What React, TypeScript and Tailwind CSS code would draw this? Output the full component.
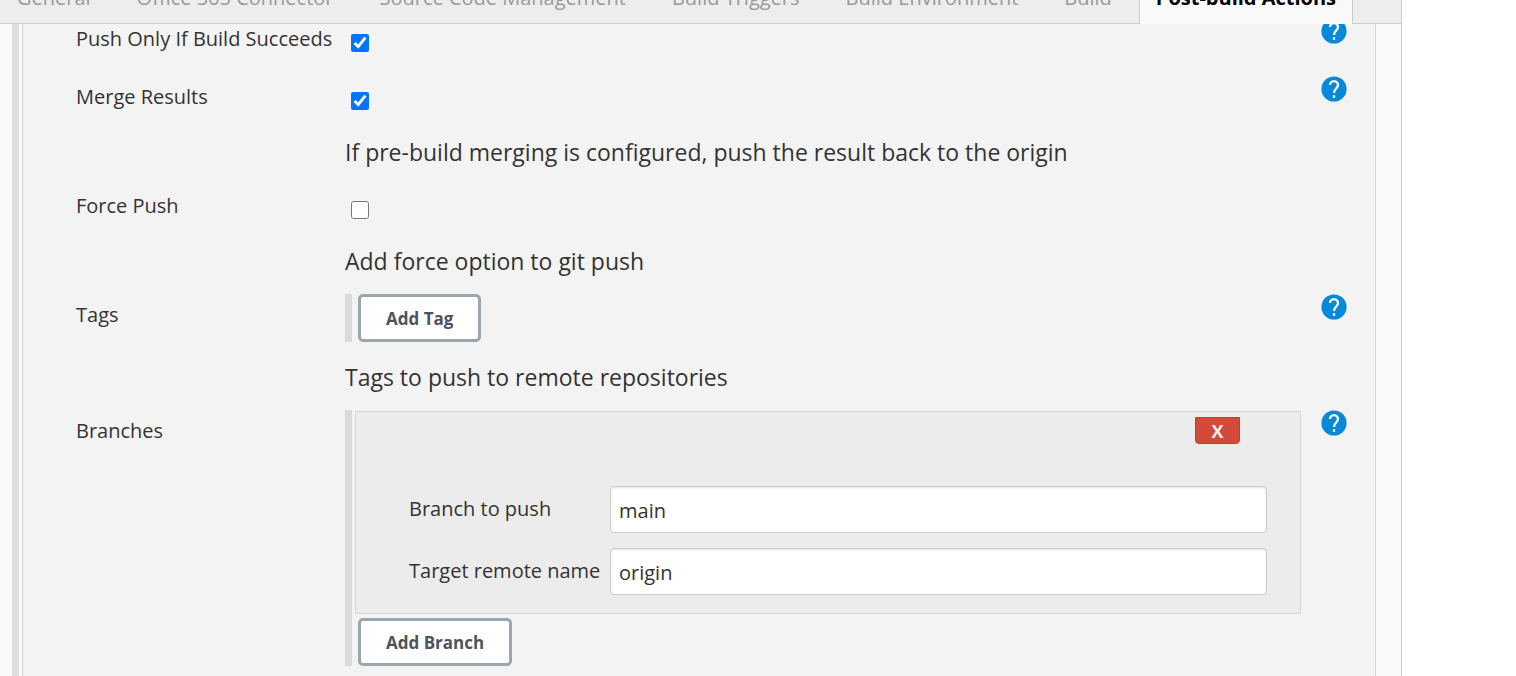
import React, { useId, useState } from "react";

const TABS = [
  "General",
  "Office 365 Connector",
  "Source Code Management",
  "Build Triggers",
  "Build Environment",
  "Build",
];

function HelpButton({ topic }: { topic: string }) {
  return (
    <button type="button" aria-label={`Help for ${topic}`} className="block size-[26px] cursor-pointer">
      <svg viewBox="2 2 20 20" className="size-[26px]" aria-hidden="true">
        <circle cx="12" cy="12" r="9.7" fill="#0788d9" />
        <path
          d="M8.9 9a3.1 3.1 0 1 1 6.2 0c0 2.5-3.1 2.8-3.1 6"
          fill="none"
          stroke="#fff"
          strokeWidth="1.8"
        />
        <rect x="11.1" y="16.8" width="1.8" height="1.9" fill="#fff" />
      </svg>
    </button>
  );
}

function Row({
  label,
  htmlFor,
  help,
  children,
}: {
  label: string;
  htmlFor?: string;
  help?: boolean;
  children: React.ReactNode;
}) {
  const labelClass = "block pt-[9px] text-[20px] leading-6 whitespace-nowrap";
  return (
    <div className="grid grid-cols-[269px_minmax(0,1fr)_46px]">
      {htmlFor ? (
        <label htmlFor={htmlFor} className={labelClass}>
          {label}
        </label>
      ) : (
        <span className={labelClass}>{label}</span>
      )}
      <div>{children}</div>
      <div className="flex items-start justify-end">{help && <HelpButton topic={label} />}</div>
    </div>
  );
}

function CheckRow({
  label,
  checked,
  help,
  description,
}: {
  label: string;
  checked?: boolean;
  help?: boolean;
  description?: string;
}) {
  const id = useId();
  return (
    <Row label={label} htmlFor={id} help={help}>
      <div className="flex h-[58px] items-start pt-4 pl-[6px]">
        <input id={id} type="checkbox" defaultChecked={checked} className="size-[18px]" />
      </div>
      {description && <Description>{description}</Description>}
    </Row>
  );
}

function Description({ children }: { children: React.ReactNode }) {
  return <p className="pt-[2px] pb-[17px] text-[23px] leading-8">{children}</p>;
}

function AddButton({ children }: { children: React.ReactNode }) {
  return (
    <button
      type="button"
      className="ml-[3px] block h-12 cursor-pointer rounded-[5px] border-3 border-[#9aa7af] bg-white px-[25px] pt-px text-[17px] font-bold text-[#4d545d]"
    >
      {children}
    </button>
  );
}

function Field({ label, value }: { label: string; value: string }) {
  const id = useId();
  return (
    <div className="grid grid-cols-[201px_minmax(0,1fr)] items-center">
      <label htmlFor={id} className="pb-[2px] text-[20px] leading-6 whitespace-nowrap">
        {label}
      </label>
      <input
        id={id}
        type="text"
        defaultValue={value}
        className="h-[47px] w-full rounded-[4px] border border-[#ccc] bg-white px-2 pt-[2px] text-[20px] shadow-[inset_0_1px_2px_rgba(0,0,0,0.12)]"
      />
    </div>
  );
}

export default function App() {
  const [branchShown, setBranchShown] = useState(true);
  return (
    <div className="min-h-screen bg-white font-['Open_Sans','Noto_Sans',sans-serif] text-[#333]">
      <div className="mr-[114px] flex min-h-screen flex-col border-r border-[#ccc] bg-[#f9f9f9]">
        <nav className="flex h-6 items-end overflow-hidden bg-[#ededed] text-[20px] leading-6 whitespace-nowrap text-[#999]">
          <div className="flex gap-[46px] border-b border-[#ccc] pr-[27px] pb-[13px] pl-[17px]">
            {TABS.map((tab) => (
              <a key={tab} href="#">
                {tab}
              </a>
            ))}
          </div>
          <a href="#" aria-current="page" className="border-x border-[#ccc] bg-[#f9f9f9] px-4 pb-[14px] font-bold text-black">
            Post-build Actions
          </a>
          <div className="h-6 flex-1 border-b border-[#ccc]" />
        </nav>

        <main className="flex flex-1 overflow-hidden pr-[25px] pl-3">
          <div className="mr-[3px] w-[7px] shrink-0 bg-[#dfdfdf]" />
          <form className="-mt-[6px] min-w-0 flex-1 border-x border-[#d3d3d3] bg-[#f3f3f3] pr-7 pl-[53px]">
            <CheckRow label="Push Only If Build Succeeds" checked help />
            <CheckRow
              label="Merge Results"
              checked
              help
              description="If pre-build merging is configured, push the result back to the origin"
            />
            <CheckRow label="Force Push" description="Add force option to git push" />
            <Row label="Tags" help>
              <div className="border-l-[7px] border-[#dadada] pl-[3px]">
                <AddButton>Add Tag</AddButton>
              </div>
              <div className="pt-[17px]">
                <Description>Tags to push to remote repositories</Description>
              </div>
            </Row>
            <Row label="Branches" help>
              <div className="border-l-[7px] border-[#dadada] pt-px pl-[3px]">
                {branchShown && (
                  <div className="mb-1 border border-[#d3d5d6] bg-[#ececec] pt-[5px] pr-[33px] pb-[18px] pl-[53px]">
                    <div className="flex justify-end pr-[27px] pb-[42px]">
                      <button
                        type="button"
                        aria-label="Delete branch"
                        onClick={() => setBranchShown(false)}
                        className="h-[27px] w-[45px] cursor-pointer rounded-b-[4px] border border-[#c13f30] bg-[#d44a3a] pt-px text-[18px] leading-6 font-bold text-[#eee]"
                      >
                        X
                      </button>
                    </div>
                    <div className="flex flex-col gap-[15px]">
                      <Field label="Branch to push" value="main" />
                      <Field label="Target remote name" value="origin" />
                    </div>
                  </div>
                )}
                <AddButton>Add Branch</AddButton>
              </div>
            </Row>
          </form>
        </main>
      </div>
    </div>
  );
}
